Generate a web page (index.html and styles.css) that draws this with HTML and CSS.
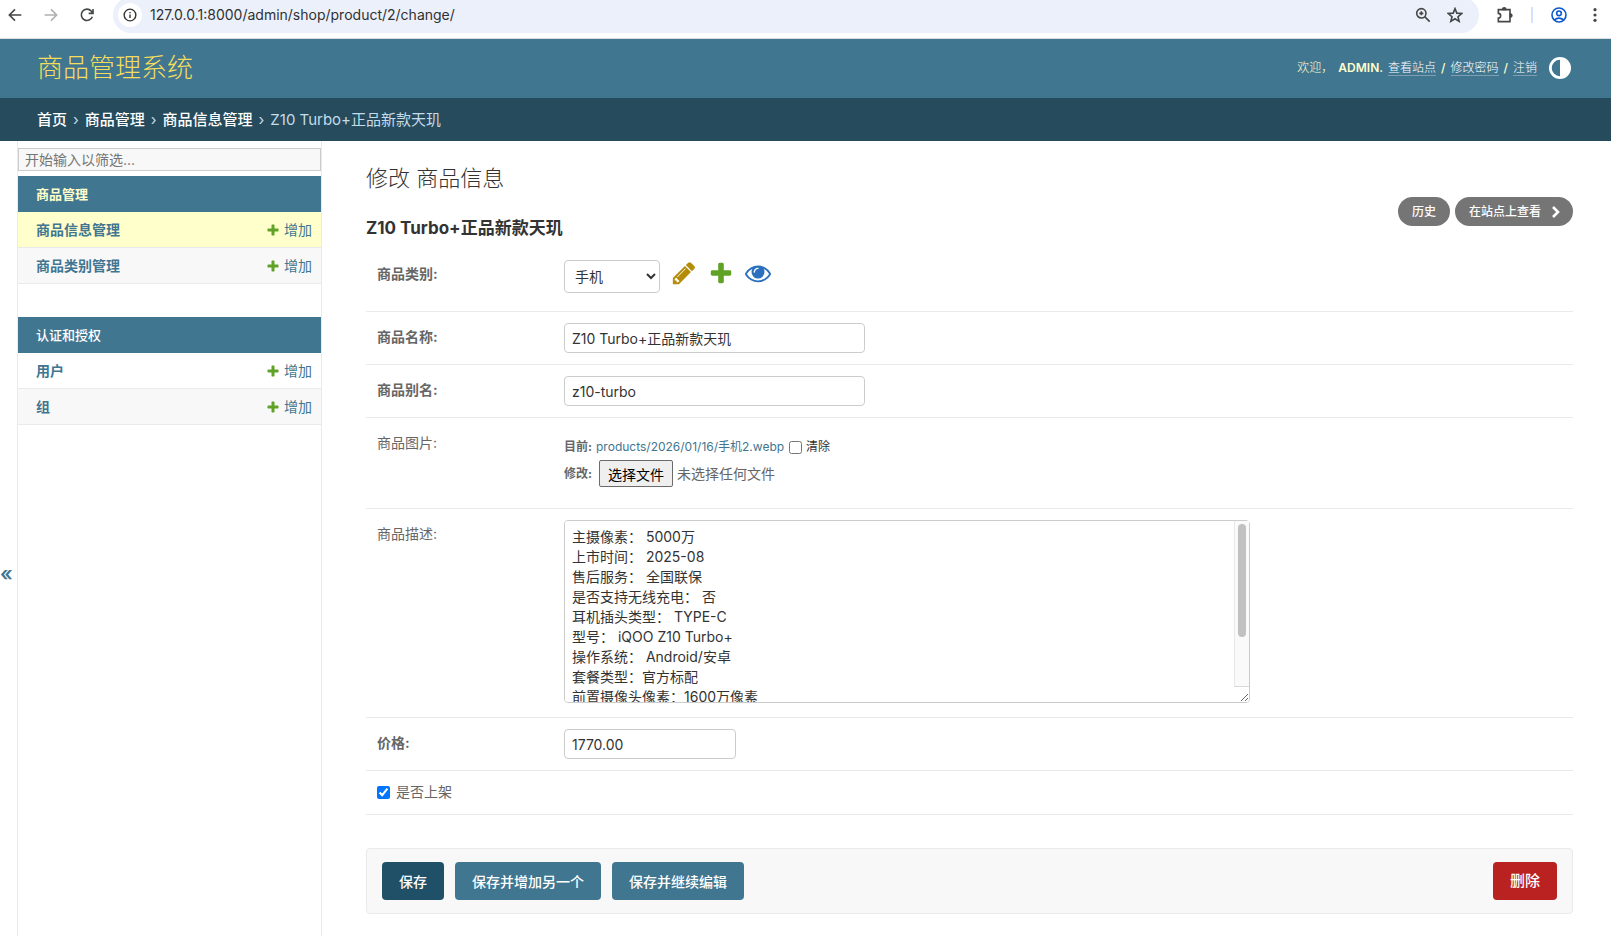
FILE: index.html
```html
<!DOCTYPE html>
<html lang="zh-CN">
<head>
  <meta charset="UTF-8">
  <title>Z10 Turbo+正品新款天玑 | 修改 商品信息</title>
  <link rel="stylesheet" href="styles.css">
</head>
<body>

  <svg class="sprite" aria-hidden="true">
    <symbol id="icon-plus" viewBox="0 0 1792 1792">
      <path d="M1600 796v192q0 40-28 68t-68 28h-416v416q0 40-28 68t-68 28h-192q-40 0-68-28t-28-68v-416h-416q-40 0-68-28t-28-68v-192q0-40 28-68t68-28h416v-416q0-40 28-68t68-28h192q40 0 68 28t28 68v416h416q40 0 68 28t28 68z"/>
    </symbol>
  </svg>

  <div class="browser-bar">
    <button type="button" class="nav-button" aria-label="后退"><svg viewBox="0 0 24 24"><path d="M12 3.500L3.500 12l8.500 8.500M4 12H21.500"/></svg></button>
    <button type="button" class="nav-button disabled" aria-label="前进" disabled><svg viewBox="0 0 24 24"><path d="M12 3.500l8.500 8.500-8.500 8.500M20 12H2.500"/></svg></button>
    <button type="button" class="nav-button" aria-label="刷新"><svg viewBox="0 0 24 24"><path d="M20 14.500a8.500 8.500 0 1 1-1.700-8.500L20.500 9M21 3V9.500H14.500"/></svg></button>
    <div class="omnibox">
      <span class="site-info"><svg viewBox="0 0 24 24"><circle cx="12" cy="12" r="10"/><path d="M12 11v6M12 7v2.200"/></svg></span>
      <input type="text" class="url" aria-label="地址" value="127.0.0.1:8000/admin/shop/product/2/change/">
      <button type="button" class="omni-button" aria-label="缩放"><svg viewBox="0 0 24 24"><circle cx="9.500" cy="9.500" r="7"/><path d="M14.500 14.500l7.500 7.500M6.500 9.500h6M9.500 6.500v6"/></svg></button>
      <button type="button" class="omni-button" aria-label="收藏"><svg viewBox="0 0 24 24"><path d="M12 2.500l2.700 6.700 7.300.6-5.500 4.700 1.700 7-6.200-3.800L5.800 21.500l1.700-7L2 9.800l7.300-.6z"/></svg></button>
    </div>
    <button type="button" class="nav-button" aria-label="扩展程序"><svg viewBox="0 0 24 24"><path d="M2 4h17.500v18H2v-5.500a3.500 3.500 0 0 0 0-7z"/><path d="M8.500 3.500a2.300 2.300 0 0 1 4.600 0zM20 10.500a2.300 2.300 0 0 1 0 4.600z" fill="currentColor"/></svg></button>
    <span class="bar-divider"></span>
    <button type="button" class="nav-button profile" aria-label="个人资料"><svg viewBox="0 0 24 24"><circle cx="12" cy="12" r="10.500"/><circle cx="12" cy="9.500" r="3.500"/><path d="M5 19.500q7-5.500 14 0"/></svg></button>
    <button type="button" class="nav-button menu" aria-label="菜单"><svg viewBox="0 0 24 24"><g fill="currentColor" stroke="none"><circle cx="12" cy="4" r="2.400"/><circle cx="12" cy="12" r="2.400"/><circle cx="12" cy="20" r="2.400"/></g></svg></button>
  </div>

  <header class="header">
    <a href="#" class="site-name">商品管理系统</a>
    <div class="user-tools">
      <span class="welcome">欢迎，</span>
      <strong>ADMIN.</strong>
      <a href="#">查看站点</a> <span>/</span>
      <a href="#">修改密码</a> <span>/</span>
      <a href="#">注销</a>
      <button type="button" class="theme-toggle" aria-label="切换主题">
        <svg viewBox="0 0 24 24"><circle cx="12" cy="12" r="12" fill="#fff"/><path d="M12 3a9 9 0 0 0 0 18z" fill="#417690"/></svg>
      </button>
    </div>
  </header>

  <nav class="breadcrumbs">
    <a href="#">首页</a> <span>›</span>
    <a href="#">商品管理</a> <span>›</span>
    <a href="#">商品信息管理</a> <span>›</span>
    <span>Z10 Turbo+正品新款天玑</span>
  </nav>

  <div class="main">
    <button type="button" class="toggle-nav" aria-label="切换导航">«</button>

    <nav class="sidebar">
      <input type="search" class="nav-filter" placeholder="开始输入以筛选..." aria-label="过滤导航项目">
      <table class="module">
        <caption><a href="#" class="section current">商品管理</a></caption>
        <tbody>
          <tr class="current-model">
            <th scope="row"><a href="#">商品信息管理</a></th>
            <td><a href="#" class="addlink"><svg><use href="#icon-plus"/></svg>增加</a></td>
          </tr>
          <tr>
            <th scope="row"><a href="#">商品类别管理</a></th>
            <td><a href="#" class="addlink"><svg><use href="#icon-plus"/></svg>增加</a></td>
          </tr>
        </tbody>
      </table>
      <table class="module">
        <caption><a href="#" class="section">认证和授权</a></caption>
        <tbody>
          <tr>
            <th scope="row"><a href="#">用户</a></th>
            <td><a href="#" class="addlink"><svg><use href="#icon-plus"/></svg>增加</a></td>
          </tr>
          <tr>
            <th scope="row"><a href="#">组</a></th>
            <td><a href="#" class="addlink"><svg><use href="#icon-plus"/></svg>增加</a></td>
          </tr>
        </tbody>
      </table>
    </nav>

    <main class="content">
      <h1>修改 商品信息</h1>
      <div class="object-head">
        <h2>Z10 Turbo+正品新款天玑</h2>
        <div class="object-tools">
          <a href="#">历史</a>
          <a href="#" class="viewsite">在站点上查看<svg viewBox="0 0 12 12"><path d="M3 1l5 5-5 5"/></svg></a>
        </div>
      </div>

      <form>
        <div class="form-row category">
          <label class="required" for="id_category">商品类别:</label>
          <div class="related">
            <select id="id_category"><option>手机</option></select>
            <a href="#" class="change" aria-label="修改"><svg viewBox="0 0 1792 1792"><path d="M491 1536l91-91-235-235-91 91v107h128v128h107zm523-928q0-22-22-22-10 0-17 7l-542 542q-7 7-7 17 0 22 22 22 10 0 17-7l542-542q7-7 7-17zm-54-192l416 416-832 832h-416v-416zm683 96q0 53-37 90l-166 166-416-416 166-165q36-38 90-38 53 0 91 38l235 234q37 39 37 91z"/></svg></a>
            <a href="#" class="add" aria-label="增加"><svg><use href="#icon-plus"/></svg></a>
            <a href="#" class="view" aria-label="查看"><svg viewBox="0 0 1792 1792"><path d="M1664 960q-152-236-381-353 61 104 61 225 0 185-131.5 316.5t-316.5 131.5-316.5-131.5-131.5-316.5q0-121 61-225-229 117-381 353 133 205 333.5 326.5t434.5 121.5 434.5-121.5 333.5-326.5zm-720-384q0-20-14-34t-34-14q-125 0-214.5 89.5t-89.5 214.5q0 20 14 34t34 14 34-14 14-34q0-86 61-147t147-61q20 0 34-14t14-34zm848 384q0 34-20 69-140 230-376.5 368.5t-499.5 138.5-499.5-139-376.5-368q-20-35-20-69t20-69q140-229 376.5-368t499.5-139 499.5 139 376.5 368q20 35 20 69z"/></svg></a>
          </div>
        </div>
        <div class="form-row">
          <label class="required" for="id_name">商品名称:</label>
          <input type="text" id="id_name" value="Z10 Turbo+正品新款天玑">
        </div>
        <div class="form-row">
          <label class="required" for="id_slug">商品别名:</label>
          <input type="text" id="id_slug" value="z10-turbo">
        </div>
        <div class="form-row image">
          <label for="id_image">商品图片:</label>
          <div class="file-upload">
            <div class="file-line">
              <b>目前:</b>
              <a href="#">products/2026/01/16/手机2.webp</a>
              <input type="checkbox" id="image-clear">
              <label for="image-clear">清除</label>
            </div>
            <div class="file-line">
              <b>修改:</b>
              <button type="button" id="id_image" class="file-button">选择文件</button>
              <span class="file-name">未选择任何文件</span>
            </div>
          </div>
        </div>
        <div class="form-row">
          <label for="id_description">商品描述:</label>
          <div class="text-area">
            <textarea id="id_description">主摄像素： 5000万
上市时间： 2025-08
售后服务： 全国联保
是否支持无线充电： 否
耳机插头类型： TYPE-C
型号： iQOO Z10 Turbo+
操作系统： Android/安卓
套餐类型：官方标配
前置摄像头像素：1600万像素


</textarea>
            <div class="scrollbar"><div class="thumb"></div></div>
          </div>
        </div>
        <div class="form-row">
          <label class="required" for="id_price">价格:</label>
          <input type="text" id="id_price" class="price" value="1770.00">
        </div>
        <div class="form-row checkbox-row">
          <input type="checkbox" id="id_available" checked>
          <label for="id_available">是否上架</label>
        </div>

        <div class="submit-row">
          <button type="submit" class="default">保存</button>
          <button type="submit">保存并增加另一个</button>
          <button type="submit">保存并继续编辑</button>
          <a href="#" class="deletelink">删除</a>
        </div>
      </form>
    </main>
  </div>

</body>
</html>
```

FILE: styles.css
```css
* {
  box-sizing: border-box;
}
body {
  margin: 0;
  height: 100vh;
  overflow: hidden;
  display: flex;
  flex-direction: column;
  background: #fff;
  color: #333;
  font-family: Inter, "Noto Sans CJK SC", sans-serif;
  font-size: 14px;
  line-height: 20px;
}
a {
  color: #417690;
  text-decoration: none;
}
button, input, select, textarea {
  font-family: inherit;
  font-size: 14px;
  margin: 0;
}
svg {
  display: block;
}
.sprite {
  display: none;
}

/* browser toolbar */
.browser-bar {
  display: flex;
  align-items: center;
  flex: none;
  height: 39px;
  padding: 0 6px 9px 5px;
  border-bottom: 1px solid #dcdcdc;
}
.nav-button, .omni-button {
  display: flex;
  justify-content: center;
  align-items: center;
  width: 20px;
  height: 20px;
  margin-right: 16px;
  padding: 0;
  border: 0;
  background: none;
  color: #444746;
}
.nav-button svg, .omni-button svg, .site-info svg {
  width: 16px;
  height: 16px;
  fill: none;
  stroke: currentColor;
  stroke-width: 2.4;
}
.nav-button.disabled {
  color: #b0b0b0;
}
.omnibox {
  display: flex;
  align-items: center;
  flex: 1;
  height: 36px;
  margin: 0 16px 0 0;
  padding: 0 14px 0 5px;
  border-radius: 18px;
  background: #ecf0fa;
}
.site-info {
  display: flex;
  justify-content: center;
  align-items: center;
  width: 24px;
  height: 24px;
  border-radius: 50%;
  background: #fff;
}
.site-info svg {
  width: 14px;
  height: 14px;
}
.url {
  flex: 1;
  padding: 0 8px;
  border: 0;
  background: none;
  color: #2f3134;
}
.omni-button {
  margin: 0 0 0 12px;
}
.bar-divider {
  width: 2px;
  height: 16px;
  margin-right: 16px;
  background: #d3e3fd;
}
.nav-button.profile {
  color: #0b57d0;
}
.nav-button.menu {
  margin-right: 0;
}

/* header */
.header {
  display: flex;
  justify-content: space-between;
  align-items: center;
  flex: none;
  height: 59px;
  padding: 0 40px 2px 37px;
  background: #417690;
}
.site-name {
  color: #f5dd5d;
  font-size: 26px;
  font-weight: 300;
  line-height: 32px;
}
.user-tools {
  display: flex;
  align-items: center;
  gap: 5px;
  color: #ffc;
  font-size: 12px;
  line-height: 15px;
  font-weight: 300;
}
.user-tools strong {
  font-weight: 600;
}
.user-tools a {
  color: #fff;
  border-bottom: 1px solid #7d9fb1;
}
.user-tools span {
  font-weight: 500;
}
.user-tools .welcome {
  font-weight: 300;
}
.theme-toggle {
  margin-left: 7px;
  padding: 0;
  border: 0;
  background: none;
}
.theme-toggle svg {
  width: 22px;
  height: 22px;
}
.breadcrumbs {
  display: flex;
  align-items: center;
  gap: 6px;
  flex: none;
  height: 43px;
  padding: 0 37px;
  background: #264b5d;
  color: #c4dce8;
  font-size: 15px;
}
.breadcrumbs a {
  color: #fff;
  font-weight: 500;
}

/* sidebar */
.main {
  display: flex;
  flex: 1;
  min-height: 0;
}
.toggle-nav {
  width: 18px;
  padding: 70px 8px 0 0;
  border: 0;
  border-right: 1px solid #eaeaea;
  background: #fff;
  color: #417690;
  font-size: 20px;
  font-weight: 600;
}
.sidebar {
  width: 304px;
  flex: none;
  padding-top: 7px;
  border-right: 1px solid #eaeaea;
}
.nav-filter {
  display: block;
  width: 100%;
  height: 23px;
  margin-bottom: 5px;
  padding: 0 6px;
  border: 1px solid #ccc;
  background: #f8f8f8;
  color: #333;
}
.nav-filter::placeholder {
  color: #757575;
}
.module {
  width: 100%;
  margin-bottom: 33px;
  border-spacing: 0;
}
.module caption {
  height: 36px;
  padding: 8px 18px;
  background: #417690;
  font-size: 13px;
  font-weight: 500;
  text-align: left;
}
.module .section {
  color: #fff;
}
.module .section.current {
  color: #ffc;
  font-weight: 700;
}
.module th, .module td {
  height: 36px;
  padding: 0 9px 0 18px;
  border-bottom: 1px solid #eaeaea;
  text-align: left;
  font-weight: 700;
}
.module td {
  font-weight: 400;
}
.module tr:nth-child(even) {
  background: #f8f8f8;
}
.module .current-model {
  background: #ffc;
}
.addlink {
  display: flex;
  justify-content: flex-end;
  align-items: center;
  gap: 4px;
}
.addlink svg {
  width: 14px;
  height: 14px;
  fill: #5fa225;
}

/* change form */
.content {
  flex: 1;
  padding: 22px 38px 0 44px;
}
h1 {
  margin: 0 0 19px;
  font-size: 22px;
  font-weight: 300;
  line-height: 30px;
}
.object-head {
  display: flex;
  justify-content: space-between;
  height: 37px;
}
h2 {
  margin: 0;
  padding-top: 5px;
  font-size: 17px;
  font-weight: 700;
  line-height: 22px;
}
.object-tools {
  display: flex;
  gap: 5px;
  margin-top: -15px;
}
.object-tools a {
  display: flex;
  align-items: center;
  gap: 9px;
  height: 29px;
  padding: 0 14px;
  border-radius: 15px;
  background: #757575;
  color: #fff;
  font-size: 12px;
  font-weight: 500;
}
.object-tools .viewsite {
  padding-right: 11px;
}
.object-tools svg {
  width: 12px;
  height: 12px;
  fill: none;
  stroke: #fff;
  stroke-width: 2.6;
}
.form-row {
  display: flex;
  align-items: flex-start;
  padding: 11px;
  border-bottom: 1px solid #eaeaea;
}
.form-row > label {
  width: 187px;
  padding-top: 4px;
  color: #666;
}
.form-row > .required {
  font-weight: 700;
}
.form-row.category {
  height: 63px;
}
.form-row input[type="text"] {
  width: 301px;
  height: 30px;
  padding: 0 7px;
  border: 1px solid #ccc;
  border-radius: 4px;
  background: #fff;
  color: #333;
}
.form-row input.price {
  width: 172px;
}
.related {
  display: flex;
  gap: 11px;
}
select {
  width: 96px;
  height: 33px;
  padding: 0 6px;
  border: 1px solid #ccc;
  border-radius: 4px;
  background: #fff;
  color: #333;
}
.related svg {
  width: 26px;
  height: 26px;
}
.change {
  fill: #b48c08;
}
.add {
  fill: #5fa225;
}
.view {
  fill: #2b70bf;
}
.form-row.image {
  padding: 15px 11px 18px;
}
.form-row.image > label {
  padding-top: 0;
}
.file-upload {
  padding-top: 4px;
}
.file-line {
  display: flex;
  align-items: center;
  gap: 4px;
  height: 20px;
  font-size: 12px;
}
.file-line + .file-line {
  height: 33px;
}
.file-line b {
  color: #666;
}
.file-line input {
  margin-left: 1px;
}
.file-button {
  height: 27px;
  margin-left: 3px;
  padding: 0 8px;
  border: 1px solid #6b6b6b;
  border-radius: 2px;
  background: #efefef;
  color: #000;
}
.file-name {
  color: #666;
  font-size: 14px;
}
.text-area {
  position: relative;
  margin-bottom: 3px;
}
textarea {
  display: block;
  width: 686px;
  height: 183px;
  padding: 6px 7px;
  border: 1px solid #ccc;
  border-radius: 4px;
  color: #333;
  line-height: 20px;
  resize: both;
}
/* always-visible scrollbar, ends above the resize corner */
.scrollbar {
  position: absolute;
  top: 1px;
  right: 1px;
  bottom: 16px;
  width: 15px;
  padding: 3px 3px 0;
  border-left: 1px solid #e8e8e8;
  border-bottom: 1px solid #d9d9d9;
  background: #fafafa;
  pointer-events: none;
}
.thumb {
  width: 8px;
  height: 70%;
  border-radius: 4px;
  background: #c1c1c1;
}
.checkbox-row {
  align-items: center;
  gap: 6px;
  padding-bottom: 12px;
}
.checkbox-row > label {
  padding-top: 0;
}
.submit-row {
  display: flex;
  gap: 11px;
  margin-top: 33px;
  padding: 13px 15px;
  border: 1px solid #eaeaea;
  border-radius: 4px;
  background: #f8f8f8;
}
.submit-row button, .deletelink {
  height: 38px;
  padding: 0 17px;
  border: 0;
  border-radius: 4px;
  background: #417690;
  color: #fff;
  font-weight: 500;
}
.submit-row .default {
  background: #205067;
}
.submit-row .deletelink {
  margin-left: auto;
  background: #ba2121;
  font-size: 15px;
  line-height: 38px;
}
```
